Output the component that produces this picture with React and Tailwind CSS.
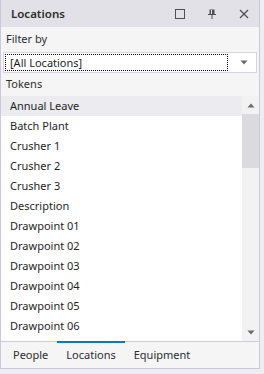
import React from "react";

const items = [
  "Annual Leave",
  "Batch Plant",
  "Crusher 1",
  "Crusher 2",
  "Crusher 3",
  "Description",
  "Drawpoint 01",
  "Drawpoint 02",
  "Drawpoint 03",
  "Drawpoint 04",
  "Drawpoint 05",
  "Drawpoint 06",
];

export default function App() {
  return (
    <div
      className="w-[264px] h-[374px] bg-[#eeeef2] text-[11px] text-[#1e1e1e]"
      style={{ fontFamily: '"Noto Sans", "Segoe UI", sans-serif' }}
    >
      <div className="w-[260px] h-[369px] border-l border-r border-b border-[#ccc9dc] flex flex-col bg-[#f5f5f5]">
        {/* Title bar */}
        <div className="h-[27px] bg-[#e1e1e7] flex items-center pl-[10px] pr-[8px]">
          <span className="font-semibold text-[11.5px] text-[#2d2d30] flex-1">Locations</span>
          <div className="flex items-center gap-[18px]">
            <svg width="14" height="14" viewBox="0 0 14 14">
              <rect x="2.5" y="2.5" width="9" height="9" fill="none" stroke="#505050" strokeWidth="1" />
            </svg>
            <svg width="14" height="14" viewBox="0 0 14 14">
              <path d="M4.5 2.5h5v5h-5z" fill="#505050" />
              <path d="M3 7.5h8" stroke="#505050" strokeWidth="1" />
              <path d="M7 8v4" stroke="#505050" strokeWidth="1" />
              <path d="M6.5 3v4" stroke="#e1e1e7" strokeWidth="1" />
            </svg>
            <svg width="14" height="14" viewBox="0 0 14 14">
              <path d="M3 3l8 8M11 3l-8 8" stroke="#505050" strokeWidth="1.3" />
            </svg>
          </div>
        </div>

        {/* Filter by */}
        <div className="h-[25px] flex items-center pl-[5px] text-[#2d2d30]">Filter by</div>
        <div className="mx-[2px] h-[21px] bg-white border border-[#d6d5e2] flex items-center pl-[1px] pr-[8px]">
          <div className="flex-1 h-[17px] border border-dotted border-black flex items-center pl-[4px] mr-[12px] leading-none">
            [All Locations]
          </div>
          <svg width="8" height="5" viewBox="0 0 8 5">
            <path d="M0.5 0.5h7l-3.5 4z" fill="#6a6a6a" />
          </svg>
        </div>

        {/* Tokens */}
        <div className="h-[23px] flex items-center pl-[5px] text-[#2d2d30]">Tokens</div>

        {/* List */}
        <div className="h-[245px] flex">
          <div className="flex-1 bg-white flex flex-col">
            {items.map((it, i) => (
              <div
                key={it}
                className={
                  "h-[20px] flex items-center pl-[9px] " + (i === 0 ? "bg-[#ebebf0]" : "")
                }
              >
                {it}
              </div>
            ))}
          </div>
          <div className="w-[17px] bg-[#f2f2f2] flex flex-col">
            <div className="h-[18px] flex items-center justify-center">
              <svg width="8" height="5" viewBox="0 0 8 5">
                <path d="M0.5 4.5h7l-3.5 -4z" fill="#6a6a6a" />
              </svg>
            </div>
            <div className="h-[54px] bg-[#dbdbdf]" />
            <div className="flex-1" />
            <div className="h-[18px] flex items-center justify-center">
              <svg width="8" height="5" viewBox="0 0 8 5">
                <path d="M0.5 0.5h7l-3.5 4z" fill="#6a6a6a" />
              </svg>
            </div>
          </div>
        </div>

        {/* Tabs */}
        <div className="flex-1 border-t border-[#ccc9dc] flex pl-[3px] text-[#2d2d30]">
          <div className="px-[9px] flex items-center">People</div>
          <div className="px-[9px] flex items-center relative">
            <div className="absolute left-0 right-0 top-[-1px] h-[2px] bg-[#0078d4]" />
            Locations
          </div>
          <div className="px-[9px] flex items-center">Equipment</div>
        </div>
      </div>
    </div>
  );
}
